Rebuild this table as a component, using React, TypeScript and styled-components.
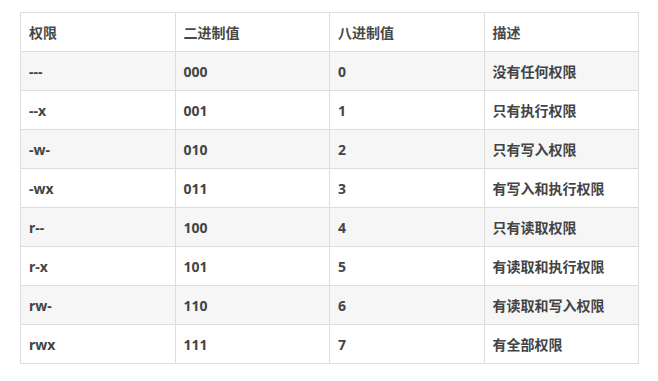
import React from 'react';
import styled, {createGlobalStyle} from "styled-components";

type RowType = {
    mode: string;
    bin: string;
    oct: string;
    desc: string;
}

const rows: RowType[] = [
    {mode: "---", bin: "000", oct: "0", desc: "没有任何权限"},
    {mode: "--x", bin: "001", oct: "1", desc: "只有执行权限"},
    {mode: "-w-", bin: "010", oct: "2", desc: "只有写入权限"},
    {mode: "-wx", bin: "011", oct: "3", desc: "有写入和执行权限"},
    {mode: "r--", bin: "100", oct: "4", desc: "只有读取权限"},
    {mode: "r-x", bin: "101", oct: "5", desc: "有读取和执行权限"},
    {mode: "rw-", bin: "110", oct: "6", desc: "有读取和写入权限"},
    {mode: "rwx", bin: "111", oct: "7", desc: "有全部权限"},
];

const GlobalStyle = createGlobalStyle`
  body {
    margin: 0;
    background: #fff;
    font-family: "Source Sans Pro", "Noto Sans", "Noto Sans CJK SC", sans-serif;
  }
`

export default function App() {
    return (
        <>
            <GlobalStyle/>
            <Page>
                <Table>
                    <thead>
                    <tr>
                        <Th>权限</Th>
                        <Th>二进制值</Th>
                        <Th>八进制值</Th>
                        <Th>描述</Th>
                    </tr>
                    </thead>
                    <tbody>
                    {rows.map((r, i) => (
                        <Row key={r.mode} $striped={i % 2 === 0}>
                            <Td>{r.mode}</Td>
                            <Td>{r.bin}</Td>
                            <Td>{r.oct}</Td>
                            <Td>{r.desc}</Td>
                        </Row>
                    ))}
                    </tbody>
                </Table>
            </Page>
        </>
    );
}

const Page = styled.div`
  padding: 12px 20px 18px 20px;
`

const Table = styled.table`
  width: 619px;
  border-collapse: collapse;
  table-layout: fixed;
  color: #444;
  font-size: 14px;
`

const Th = styled.th`
  height: 38px;
  padding: 0 8px;
  border: 1px solid #dddddd;
  text-align: left;
  font-weight: 700;
  color: #484848;
`

const Row = styled.tr<{ $striped: boolean }>`
  background: ${props => props.$striped ? "#f6f6f6" : "#fff"};
`

const Td = styled.td`
  height: 38px;
  padding: 0 8px;
  border: 1px solid #dddddd;
  font-weight: 700;
`
